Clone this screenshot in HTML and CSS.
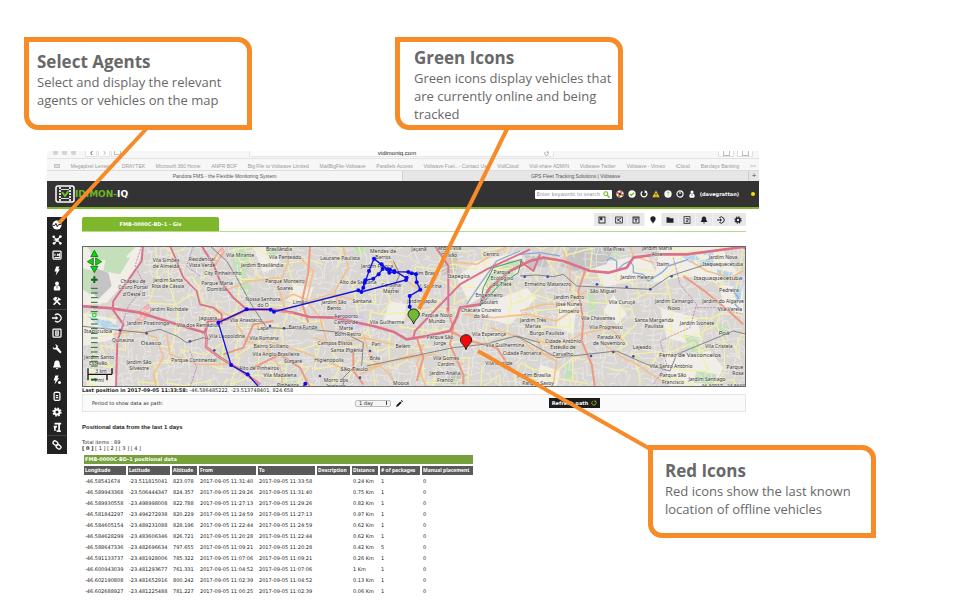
FILE: index.html
```html
<!DOCTYPE html>
<html lang="en">
<head>
<meta charset="utf-8">
<title>Vidimon-IQ vehicle map guide</title>
<link rel="stylesheet" href="styles.css">
</head>
<body>
<svg class="defs" aria-hidden="true">
  <symbol id="i-pulse" viewBox="0 0 12 12"><circle cx="6" cy="6" r="5.500" fill="currentColor"/><path d="M1 6.500h2.500l1.200-2.500 1.600 4 1.400-2.500H11" fill="none" stroke="#222" stroke-width="1.200"/></symbol>
  <symbol id="i-net" viewBox="0 0 12 12"><path d="M1.500 2l9 8M10.500 1.500l-8 9M2 6l4 0 4-4" stroke="currentColor" stroke-width="1.300" fill="none"/><circle cx="2" cy="2" r="1.500" fill="currentColor"/><circle cx="10" cy="2" r="1.700" fill="currentColor"/><circle cx="6" cy="6" r="2" fill="currentColor"/><circle cx="2.500" cy="10" r="1.600" fill="currentColor"/><circle cx="10" cy="10" r="1.600" fill="currentColor"/></symbol>
  <symbol id="i-chart" viewBox="0 0 12 12"><rect x="1.200" y="1.200" width="9.600" height="9.600" rx="1" fill="none" stroke="currentColor" stroke-width="1.500"/><path d="M3 9h6.500M3.500 7V4.500M6 7l1-2 2 2V4" fill="none" stroke="currentColor" stroke-width="1.300"/></symbol>
  <symbol id="i-bolt" viewBox="0 0 12 12"><path d="M5 .5h4L7.500 4H9.500L4.500 11.500 5.500 6.500H3z" fill="currentColor"/></symbol>
  <symbol id="i-user" viewBox="0 0 12 12"><circle cx="6" cy="3" r="2.300" fill="currentColor"/><path d="M6 5c5 0 4.500 6.500 2.500 6.500h-5C1.500 11.500 1 5 6 5z" fill="currentColor"/><path d="M6 6v3" stroke="#222" stroke-width=".8"/></symbol>
  <symbol id="i-tools" viewBox="0 0 12 12"><path d="M2 10.500L9 3M3.500 4L10 10.500" stroke="currentColor" stroke-width="2"/><path d="M1 3.500L4 1l3 1-3.500 4zM8 1l.5 2 2.500.5-1.500 2L7 4.500z" fill="currentColor"/></symbol>
  <symbol id="i-exit" viewBox="0 0 12 12"><path d="M3.500 2.300A4.600 4.600 0 1 1 3.500 9.700" fill="none" stroke="currentColor" stroke-width="1.500"/><path d="M0 5.200h4.500V3.500L7.500 6l-3 2.500V6.800H0z" fill="currentColor"/></symbol>
  <symbol id="i-box" viewBox="0 0 12 12"><rect x="1.200" y="1.200" width="9.600" height="9.600" rx="1" fill="none" stroke="currentColor" stroke-width="1.500"/><path d="M4.500 3.500h3v5h-3zM4 6h3" fill="none" stroke="currentColor" stroke-width="1.300"/></symbol>
  <symbol id="i-wrench" viewBox="0 0 12 12"><path d="M1 3.500L3 5l2-1V2L3.500.7C6 .3 7.500 2 7 4l4.500 5.500-1.500 2L5 6.500C2.500 7.200.7 6 1 3.500z" fill="currentColor"/></symbol>
  <symbol id="i-bell" viewBox="0 0 12 12"><path d="M6 .7c3 0 3.200 2.300 3.400 5L11 9H1l1.600-3.300C2.800 3 3 .7 6 .7zM4.500 9.700h3L6 11.500z" fill="currentColor"/></symbol>
  <symbol id="i-event" viewBox="0 0 12 12"><path d="M4 .5h4L6.500 4H8.500L3 11.500 4.200 6.500H2z" fill="currentColor"/><circle cx="9" cy="9" r="1.800" fill="currentColor"/></symbol>
  <symbol id="i-clip" viewBox="0 0 12 12"><rect x="2.500" y="1.500" width="7" height="9.700" rx="1.500" fill="none" stroke="currentColor" stroke-width="1.500"/><path d="M4 1.500h4M4.500 5.500h3M4.500 8h3" stroke="currentColor" stroke-width="1.500"/></symbol>
  <symbol id="i-gear" viewBox="0 0 12 12"><circle cx="6" cy="6" r="3" fill="none" stroke="currentColor" stroke-width="2.400"/><circle cx="6" cy="6" r="4.700" fill="none" stroke="currentColor" stroke-width="1.700" stroke-dasharray="2 1.690"/></symbol>
  <symbol id="i-type" viewBox="0 0 12 12"><path d="M3 2h8M8.500 2v9.500M5.500 11h5M2 5.500h4M3.500 5.500v5" stroke="currentColor" stroke-width="2" fill="none"/></symbol>
  <symbol id="i-link" viewBox="0 0 12 12"><g fill="none" stroke="currentColor" stroke-width="1.600"><rect x="1" y="1.500" width="6" height="4.400" rx="2.200" transform="rotate(35 4 4)"/><rect x="5" y="6" width="6" height="4.400" rx="2.200" transform="rotate(35 8 8)"/></g></symbol>
  <symbol id="i-book" viewBox="0 0 12 12"><rect x="1.500" y="1.500" width="9" height="9" fill="none" stroke="currentColor" stroke-width="1.400"/><path d="M3 2h3.500v5L5 5.700 3.500 7z" fill="currentColor"/></symbol>
  <symbol id="i-share" viewBox="0 0 12 12"><rect x="1" y="1.500" width="10" height="9" fill="none" stroke="currentColor" stroke-width="1.200"/><path d="M9 3.500L3.500 6 9 8.500M3 3.500l2 2" fill="none" stroke="currentColor" stroke-width="1.200"/></symbol>
  <symbol id="i-form" viewBox="0 0 12 12"><rect x="1.500" y="1.500" width="9" height="9" fill="none" stroke="currentColor" stroke-width="1.300"/><path d="M2 3h8M4 5.500h4M6 5.500V9" stroke="currentColor" stroke-width="1.400"/></symbol>
  <symbol id="i-pin" viewBox="0 0 12 12"><path d="M6 11.500C5.500 9 2 7.500 2 4.500a4 4 0 0 1 8 0C10 7.500 6.500 9 6 11.500z" fill="currentColor"/></symbol>
  <symbol id="i-folder" viewBox="0 0 12 12"><path d="M.8 2h4l1 1.500h5.400V10H.8z" fill="currentColor"/></symbol>
  <symbol id="i-report" viewBox="0 0 12 12"><rect x="1.500" y="1" width="9" height="10" fill="none" stroke="currentColor" stroke-width="1.200"/><path d="M4 4h4v1.500L5 7v1.500h3" fill="none" stroke="currentColor" stroke-width="1.300"/></symbol>
  <symbol id="i-help" viewBox="0 0 12 12"><circle cx="6" cy="6" r="5.500" fill="#fff"/><path d="M4.500 4.500c0-2 3.200-1.800 3 0C7.400 5.500 6 5.500 6 7M6 8v1.300" fill="none" stroke="#76b82a" stroke-width="1.300"/></symbol>
  <symbol id="i-ok" viewBox="0 0 12 12"><circle cx="6" cy="6" r="5.500" fill="#fff"/><path d="M3 6l2.200 2L9 4" fill="none" stroke="#76b82a" stroke-width="2"/></symbol>
  <symbol id="i-buoy" viewBox="0 0 12 12"><circle cx="6" cy="6" r="3.900" fill="none" stroke="#fff" stroke-width="3"/><circle cx="6" cy="6" r="3.900" fill="none" stroke="#e0522b" stroke-width="3" stroke-dasharray="3.060 3.060"/></symbol>
  <symbol id="i-reload" viewBox="0 0 12 12"><path d="M3.500 2.200A4.400 4.400 0 1 0 8.500 2.200" fill="none" stroke="currentColor" stroke-width="1.900"/><path d="M7 0v5l4-2.500z" fill="currentColor"/></symbol>
  <symbol id="i-warn" viewBox="0 0 12 12"><path d="M6 .8L11.500 11H.5z" fill="#f6c423"/><path d="M6 4.500v3.300M6 8.800V10" stroke="#222" stroke-width="1.300"/></symbol>
  <symbol id="i-power" viewBox="0 0 12 12"><circle cx="6" cy="6" r="4.600" fill="none" stroke="#fff" stroke-width="1.700"/><path d="M6 2.500V6" stroke="#fff" stroke-width="1.600"/></symbol>
</svg>

<main class="stage">
  <div class="browser">
    <div class="chrome">
      <div class="chrome-bar">
        <span class="lights"><i></i><i></i><i></i></span>
        <span class="navs"><b class="nav"><svg viewBox="0 0 6 6"><path d="M4 0L2 2.500 4 5" fill="none" stroke="#444"/></svg></b><b class="nav"><svg viewBox="0 0 6 6"><path d="M2 0l2 2.500L2 5" fill="none" stroke="#aaa"/></svg></b><b class="nav tabs-icon"></b></span>
        <span class="address">vidimoniq.com<svg class="reload"><use href="#i-reload"/></svg></span>
        <span class="chrome-tools"><b></b><b></b></span>
      </div>
      <nav class="bookmarks">
        <i class="grid-mark"></i>
        <a href="#">Megapixel Lenses</a><a href="#">DRAYTEK</a><a href="#">Microsoft 360 Home</a><a href="#">ANPR BOF</a><a href="#">Big File to Vidiwave Limited</a><a href="#">MailBigFile-Vidiwave</a><a href="#">Parallels Access</a><a href="#">Vidiwave Fuel...- Contact Us</a><a href="#">VidiCloud</a><a href="#">Vidi-share ADMIN</a><a href="#">Vidiwave Twitter</a><a href="#">Vidiwave - Vimeo</a><a href="#">iCloud</a><a href="#">Barclays Banking</a>
        <span class="more">&gt;&gt;</span>
      </nav>
      <div class="tabs"><span class="tab on">Pandora FMS - the Flexible Monitoring System</span><span class="tab">GPS Fleet Tracking Solutions | Vidiwave</span><span class="plus">+</span></div>
    </div>

    <header class="app-head">
      <svg class="logo" viewBox="0 0 20 18"><rect x="1" y="1" width="18" height="16" rx="2" fill="#333" stroke="#fff" stroke-width="1.500"/><path d="M5 2v14M15 2v14" stroke="#ddd" stroke-width="2" stroke-dasharray="2 1"/><path d="M6 4.500h8M6 13.500h8" stroke="#ddd"/><path d="M7 7l3 4 3.500-5" fill="none" stroke="#76c82a" stroke-width="1.800"/></svg>
      <span class="brand">IDIMON-<em>IQ</em></span>
      <div class="head-tools">
        <div class="search"><input type="text" aria-label="Search" placeholder="Enter keywords to search"><svg viewBox="0 0 10 10"><circle cx="4" cy="4" r="2.800" fill="none" stroke="#76b82a" stroke-width="1.500"/><path d="M6 6l3.500 3.500" stroke="#76b82a" stroke-width="2"/></svg></div>
        <svg class="hi"><use href="#i-buoy"/></svg><svg class="hi"><use href="#i-ok"/></svg><svg class="hi"><use href="#i-reload"/></svg><svg class="hi"><use href="#i-warn"/></svg><svg class="hi"><use href="#i-help"/></svg><svg class="hi"><use href="#i-power"/></svg><svg class="hi"><use href="#i-user"/></svg>
        <span class="who">(davegrattan)</span><i class="dot"></i>
      </div>
    </header>

    <div class="app">
      <nav class="side" aria-label="Main menu">
        <div class="side-group"><svg><use href="#i-pulse"/></svg><svg><use href="#i-net"/></svg><svg><use href="#i-chart"/></svg><svg><use href="#i-bolt"/></svg><svg><use href="#i-user"/></svg><svg><use href="#i-tools"/></svg></div>
        <div class="side-group tall"><svg><use href="#i-exit"/></svg><svg><use href="#i-box"/></svg><svg><use href="#i-wrench"/></svg><svg><use href="#i-bell"/></svg><svg><use href="#i-event"/></svg><svg><use href="#i-clip"/></svg><svg><use href="#i-gear"/></svg><svg><use href="#i-type"/></svg></div>
        <div class="side-group last-group"><svg><use href="#i-link"/></svg></div>
      </nav>

      <section class="content">
        <div class="agent-head">
          <h1 class="agent-tab">FMB-0000C-BD-1 - Gis</h1>
          <div class="agent-tools"><span><svg><use href="#i-book"/></svg></span><span><svg><use href="#i-share"/></svg></span><span><svg><use href="#i-form"/></svg></span><span class="on"><svg><use href="#i-pin"/></svg></span><span><svg><use href="#i-folder"/></svg></span><span><svg><use href="#i-report"/></svg></span><span><svg><use href="#i-bell"/></svg></span><span><svg><use href="#i-exit"/></svg></span><span><svg><use href="#i-gear"/></svg></span></div>
        </div>

        <svg class="map" viewBox="82 245 664 141" role="img" aria-label="Map of vehicle positions">
          <rect x="82" y="245" width="664" height="141" fill="#d9d6d3"/>
          <g transform="translate(80 240) scale(.333333)" stroke-linejoin="round" fill="none">
            <g fill="#f1eee8">
              <path d="M0 15h190l-20 70-90 100-80 10zM10 215l100 20-10 60-90 20zM20 380l90 20v40H20zM520 20l70-5 10 60-50 20zM640 130l60 10-20 60-60-20zM1130 110l60-50 140-30-10 60-90 60-60 40zM1190 200l150-60 30 30-80 80-90-20zM1540 70l160-30 30 60-160 40zM1740 20l180-5 60 90-70 20-90-20-100 20zM1740 200l110 30 20 90-110-30zM1600 160l40 60-30 30-40-40zM1440 180l50 10-10 90-50-20zM1750 350l140-20 40 50-30 60h-130zM1380 370l60 20-10 50h-60zM930 180l50 10-10 60-60-10zM1920 130l70 10v80l-60-10z"/>
            </g>
            <g fill="#c3e0bb">
              <path d="M20 15h150l-30 30-20 50-30-40-40 5zM0 80l40 10 20 60-30 10-30-20zM455 25l40-10 20 40-20 50 20 40-20 20-30-60zM560 15l40 0-10 30-30-5zM80 40l70 10-30 50-50-10zM400 330l50 0 0 40-40-10zM1220 110l60-50 45-5-30 60-80 60zM1590 20l30 20-20 20zM1810 280l50 10 10 60-40-20zM1900 240l50 20-20 30zM820 15l40 5-10 20-30-5zM1460 370l20 0-10 60-15-20zM1520 150l20 0 10 60-20 10zM600 420l50 0 0 20-50 0zM1850 390l60 10-10 30-60-5z"/>
            </g>
            <g fill="#c5c4c5"><path d="M45 80l40 15 10 40-40 40-25-30zM1080 20l50 0 5 70-50 15zM1330 40l60 5 20 30-60 10zM1470 20l130 0-20 50-80 25-60-20zM1110 390l50 10-10 30-50 0z"/></g>
            <path d="M395 60l30-40 10 10-30 45zM165 240l40-30 5 10-35 30zM175 215l30-25 6 8-30 25z" fill="#f3b7b2" stroke="#ea8d88" stroke-width="2"/>
            <path d="M770 215l80 0 0 50-80 10z" fill="#d9c9e3"/>
            <g fill="#b5d6ea"><path d="M20 225l70 15 30 20-50 5zM1800 40l40-5 20 20-30 10zM1850 60l50-10 0 20-40 5zM1870 30l30 0 0 12-30 0zM1910 85l50 10-20 25-25-10zM1960 130l25 10-5 50-20-30zM1970 90l20 15-5 20-15-15z"/></g>
            <g id="minor" stroke="#f2f0ee" stroke-width="2"></g>
            <g id="streets" stroke="#f3efa6" stroke-width="4"></g>
            <path d="M1160 190l40-60 50-70 70-30M1320 40l60-5 60 10M1580 60l10-10 20 10 0 30 20-20 20-10 10 15 0 20 30 5 15 20 40-25 20-20 60-20M1960 150l15 20-10 20 20 20" stroke="#8fa9d8" stroke-width="4"/>
            <g stroke="#f4c08e" stroke-width="5">
              <path d="M100 280l70-10 60 20 20 60-30 50 10 40M260 280l10 60 80 30 90 0M400 200l60 30 40 70 60 20 40 60 10 60M600 180l40-20 50 20 60-20 70 15M620 15l5 50-30 70 20 70M700 290l60 20 90-20 90 20M660 50l40 40-20 90 40 50 20 70M850 280l20 70 60 50 20 40M790 20l15 60-40 70 10 50M560 300l100 30 150 60 60-10 130-40M930 60l50 60 60 40M1100 60l90 10 100-60M1150 220l90 10 100-10 90 20 60-40M1380 300l60 20 60-40 90-20 40 40M1370 290l20 50 40 20-10 70M1320 210l70-20 70 0 60-40M1450 30l20 60 0 60M1030 310l-20 60 30 70M1570 310l60 40 40 20 90 60M1830 60l50 30 70 20 40-20M1650 15l10 30 60 20M840 400l90-40 130-20 90 30M1230 260l90 30 40 40 80 20M430 150l80-30 90-10"/>
            </g>
            <g stroke="#ee9a80" stroke-width="6">
              <path d="M1515 90l-20 60 15 90-5 60 30 70 10 70M1810 105l70 50 60 50 50 45M690 15l-5 80-20 90 20 60M1100 200l20 60-10 50 40 90 0 30M1010 290l20 60-20 70M520 380l80-40 60 40 30 60M430 340l60-20 30-70 60-10M820 330l0 60 30 40M1110 270l60 30 80 20 40 60"/>
            </g>
            <g stroke="#dc7289" stroke-width="8">
              <path d="M0 195l95 7 85 13 110 35 85 25 5 15-2 28 42 32 50 30 70 50"/>
              <path d="M190 0l-5 60-35 50-50 70-2 25 32 45-18 50-4 140" stroke-width="6"/>
              <path d="M270 15l20 45 20 50 40 40 10 40 40 10 25 20 0 30" stroke-width="5"/>
              <path d="M375 275l10-35 55-5 60-30 70 0 70 10 50 13 70 2 120 25 60 17 40 23 60-10 70-15 20-40 10-30 60-10 30-50 60-50 60-30 40-10 60 10 80 30 55 5 55-15 20-30 70-10 90 0 170-22 40 22 25 50-25 70 35 60 0 60-35 60-15 100"/>
              <path d="M365 15l35 55 20 50 40 50 40 35M1000 290l5-20 135-140 80-45 130-60M1065 15l20 30 20 30 0 135M1320 60l40 30 20-50" stroke-width="6"/>
            </g>
            <path d="M375 275l5 15-2 28 42 32 50 30 70 50M500 207l70 0 70 10" stroke="#f0a0ae" stroke-width="3"/>
            <g stroke="#858588" stroke-width="3">
              <path d="M0 255l120 13 70 7 50-10 50 20 30 20 50-15 20 5M390 15l50 45 30 50 50 90 40 60 130 5 100 10 60 30-5 70M860 375l260-55 90-10 100-25 70 20M1320 105l50-3 50 5 30-7 40 35 220 10 60-40 110-35 40 0M1300 285l20 5 110 60 180-20 90 40 70 20 20-50 170-70 40 10M820 380l-30 30 0 30M940 60l20 40-30 60"/>
            </g>
            <path d="M185 15l-20 60 30 60-50 60-20 60M340 15l-20 60 40 30M1780 50l20 80 50 60-20 70-90 40 20 70-40 60M1850 200l60 0 80 20M330 440l20-60-20-50" stroke="#c490c8" stroke-width="3" stroke-dasharray="7 3"/>
            <path d="M1210 140l30-60 85-25-10 40-60 40-55 60z" stroke="#4c8f63" stroke-width="3"/>
            <g id="stations" fill="#3f4fa5"></g>
          </g>
          <g id="labels" class="labels"></g>
          <g transform="translate(80 240) scale(.333333)" fill="none">
            <path d="M538 440L503 400 453 372 415 245 500 205 572 206 582 212 835 148 844 153 978 117 978 110 943 90 922 85 882 53 867 90 850 140 856 118 880 113 896 100 908 84 905 70 882 53M835 148l9 5 12-35M905 70l23 25 15-3 42 1 23 7 2 24 11 22-32 19 0 32 12 28M676 428l-15 20" stroke="#1414d8" stroke-width="4"/>
            <g id="track" fill="#0a0af0"></g>
            <g stroke="#124d12" stroke-width="2" fill="#08d908"><path d="M43 28l11 19H32zM43 95l11-19H32zM22 62l18-11v22zM65 62L47 51v22z"/></g>
            <path d="M33 116h20M43 106v20" stroke="#0b6b12" stroke-width="6"/>
            <path d="M33 142h20M33 156h20M33 170h20M33 184h20M33 198h20M33 212h20M33 235h20M33 249h20M33 263h20M33 277h20M33 291h20M33 305h20M33 319h20M33 333h20M33 347h20M33 361h20M33 375h20" stroke="#1c6b2c" stroke-width="3"/>
            <path d="M38 217h10v10H38z" stroke="#0ae00a" stroke-width="3"/>
            <path d="M33 416h20" stroke="#0b6b12" stroke-width="6"/>
            <path d="M24 382v36M24 400h72M96 382v18M81 400v18" stroke="#111" stroke-width="4"/>
            <path d="M1001 249c-5-16-17-19-17-29a17 16 0 0 1 34 0c0 10-12 13-17 29z" fill="#72b832" stroke="#222" stroke-width="3"/>
            <path d="M1158 326c-5-16-17-19-17-29a17 16 0 0 1 34 0c0 10-12 13-17 29z" fill="#f70808" stroke="#222" stroke-width="3"/>
          </g>
        </svg>

        <p class="last"><strong>Last position in 2017-09-05 11:33:58:</strong> -46.586485222, -23.513748401, 824.658</p>

        <form class="filter">
          <label for="period">Period to show data as path:</label>
          <span class="period"><select id="period"><option>1 day</option></select><svg viewBox="0 0 10 10"><path d="M0 10l1-3 5-5 2 2-5 5zM7 1l1-1 2 2-1 1z" fill="#111"/></svg></span>
          <button type="button">Refresh path <svg><use href="#i-reload"/></svg></button>
        </form>

        <h2>Positional data from the last 1 days</h2>
        <p class="total">Total items : 89</p>
        <p class="pages"><strong>[ 0 ]</strong> [ 1 ] [ 2 ] [ 3 ] [ 4 ]</p>

        <table>
          <colgroup><col class="c1"><col class="c1"><col class="c3"><col class="c4"><col class="c4"><col class="c6"><col class="c7"><col class="c8"><col class="c9"></colgroup>
          <thead>
            <tr class="title"><th colspan="9">FMB-0000C-BD-1 positional data</th></tr>
            <tr class="heads"><th>Longitude</th><th>Latitude</th><th>Altitude</th><th>From</th><th>To</th><th>Description</th><th>Distance</th><th># of packages</th><th>Manual placement</th></tr>
          </thead>
          <tbody>
            <tr><td>-46.58541674</td><td>-23.511815041</td><td>823.078</td><td>2017-09-05 11:31:40</td><td>2017-09-05 11:33:58</td><td></td><td>0.24 Km</td><td>1</td><td>0</td></tr>
            <tr><td>-46.589943368</td><td>-23.506444347</td><td>824.357</td><td>2017-09-05 11:29:26</td><td>2017-09-05 11:31:40</td><td></td><td>0.75 Km</td><td>1</td><td>0</td></tr>
            <tr><td>-46.589930558</td><td>-23.498998008</td><td>822.788</td><td>2017-09-05 11:27:13</td><td>2017-09-05 11:29:26</td><td></td><td>0.82 Km</td><td>1</td><td>0</td></tr>
            <tr><td>-46.581842297</td><td>-23.494272938</td><td>820.229</td><td>2017-09-05 11:24:59</td><td>2017-09-05 11:27:13</td><td></td><td>0.97 Km</td><td>1</td><td>0</td></tr>
            <tr><td>-46.584605154</td><td>-23.489231088</td><td>828.196</td><td>2017-09-05 11:22:44</td><td>2017-09-05 11:24:59</td><td></td><td>0.62 Km</td><td>1</td><td>0</td></tr>
            <tr><td>-46.584628299</td><td>-23.483606346</td><td>826.721</td><td>2017-09-05 11:20:28</td><td>2017-09-05 11:22:44</td><td></td><td>0.62 Km</td><td>1</td><td>0</td></tr>
            <tr><td>-46.588647336</td><td>-23.482696634</td><td>797.655</td><td>2017-09-05 11:09:21</td><td>2017-09-05 11:20:28</td><td></td><td>0.42 Km</td><td>5</td><td>0</td></tr>
            <tr><td>-46.591133737</td><td>-23.481928006</td><td>785.322</td><td>2017-09-05 11:07:06</td><td>2017-09-05 11:09:21</td><td></td><td>0.26 Km</td><td>1</td><td>0</td></tr>
            <tr><td>-46.600943039</td><td>-23.481293677</td><td>761.331</td><td>2017-09-05 11:04:52</td><td>2017-09-05 11:07:06</td><td></td><td>1 Km</td><td>1</td><td>0</td></tr>
            <tr><td>-46.602190808</td><td>-23.481652916</td><td>800.242</td><td>2017-09-05 11:02:39</td><td>2017-09-05 11:04:52</td><td></td><td>0.13 Km</td><td>1</td><td>0</td></tr>
            <tr><td>-46.602688927</td><td>-23.481225488</td><td>781.227</td><td>2017-09-05 11:00:25</td><td>2017-09-05 11:02:39</td><td></td><td>0.06 Km</td><td>1</td><td>0</td></tr>
            <tr><td>-46.603688363</td><td>-23.480884403</td><td>779.314</td><td>2017-09-05 10:58:10</td><td>2017-09-05 11:00:25</td><td></td><td>0.22 Km</td><td>1</td><td>0</td></tr>
          </tbody>
        </table>
      </section>
    </div>
  </div>

  <svg class="leaders" viewBox="0 0 960 600" aria-hidden="true"><path d="M148 127L59 223M508 127L419 309M652 450L478 351" stroke="#f68b28" stroke-width="4" fill="none"/></svg>
  <aside class="callout agents"><h3>Select Agents</h3><p>Select and display the relevant<br>agents or vehicles on the map</p></aside>
  <aside class="callout green"><h3>Green Icons</h3><p>Green icons display vehicles that<br>are currently online and being<br>tracked</p></aside>
  <aside class="callout red"><h3>Red Icons</h3><p>Red icons show the last known<br>location of offline vehicles</p></aside>
</main>
<script src="map.js"></script>
</body>
</html>
```

FILE: styles.css
```css
* { box-sizing: border-box; }
body { margin: 0; background: #fff; font-family: "DejaVu Sans", Verdana, sans-serif; font-size: 5px; line-height: 6px; color: #222; }
h1, h2, h3, p { margin: 0; }
a { color: inherit; text-decoration: none; }
.defs { position: absolute; width: 0; height: 0; }
.stage { position: relative; height: 100vh; overflow: hidden; padding: 151px 201px 0 47px; }

.chrome { font-family: "Liberation Sans", Arial, sans-serif; background: #f7f7f7; color: #999; }
.chrome-bar { display: flex; align-items: flex-start; height: 8px; border-bottom: 1px solid #e2e2e2; padding: 0 6px; }
.lights { display: flex; gap: 4px; width: 32px; }
.lights i { width: 5px; height: 4px; border-radius: 0 0 3px 3px; background: #d3d3d3; }
.navs { display: flex; gap: 1px; }
.nav { width: 12px; height: 6px; border: 1px solid #e3e3e3; border-top: 0; background: #fff; }
.nav svg { display: block; width: 5px; height: 5px; margin: 0 auto; }
.tabs-icon::before { content: ""; display: block; width: 5px; height: 3px; margin: 0 auto; border: 1px solid #bbb; border-top: 0; }
.address { flex: 1; margin: 0 164px 0 126px; height: 6px; padding-right: 4px; border: 1px solid #e6e6e6; border-top: 0; background: #fcfcfc; text-align: center; font-size: 6px; line-height: 5px; color: #222; }
.reload { float: right; width: 5px; height: 5px; color: #999; }
.chrome-tools { display: flex; gap: 3px; }
.chrome-tools b { width: 16px; height: 6px; border: 1px solid #e0e0e0; border-top: 0; background: #fff; }
.chrome-tools b::before { content: ""; display: block; width: 5px; height: 4px; margin: 0 auto; border: 1px solid #bbb; border-top: 0; }
.bookmarks { display: flex; justify-content: space-between; align-items: center; height: 12px; padding: 2px 3px 0 7px; border-bottom: 1px solid #dcdcdc; white-space: nowrap; }
.grid-mark { width: 6px; height: 4px; border: 1px solid #c4c4c4; background: #ddd; }
.tabs { display: flex; height: 10px; line-height: 10px; text-align: center; color: #555; background: #e6e6e6; }
.tab { flex: 34; }
.tab.on { flex: 35; background: #f5f5f5; border-right: 1px solid #d0d0d0; }
.plus { width: 11px; border-left: 1px solid #ccc; font-size: 8px; }

.app-head { display: flex; align-items: center; height: 28px; padding: 0 4px 0 8px; background: #333; border-bottom: 2px solid #7eb72b; }
.logo { width: 20px; height: 18px; }
.brand { font-size: 9px; line-height: 10px; font-weight: bold; color: #6fb52a; }
.brand em { font-style: normal; color: #fff; }
.head-tools { display: flex; align-items: center; gap: 4px; margin-left: auto; }
.search { display: flex; align-items: center; width: 77px; height: 9px; padding: 0 2px; background: #fff; border-radius: 1px; }
.search input { flex: 1; min-width: 0; height: 7px; padding: 0; border: 0; background: none; font: 5px/7px "DejaVu Sans", sans-serif; }
.search input::placeholder { color: #888; }
.search svg { width: 7px; height: 7px; }
.hi { width: 8px; height: 8px; color: #fff; }
.who { color: #fff; font-weight: bold; }
.dot { width: 4px; height: 4px; margin-left: 8px; border-radius: 2px; background: #fd0; }

.app { display: flex; align-items: flex-start; }
.side { width: 20px; margin-top: 8px; background: #222; color: #fff; }
.side-group { display: flex; flex-direction: column; align-items: center; justify-content: space-around; height: 93px; border-bottom: 1px solid #444; }
.side-group.tall { height: 126px; }
.side-group.last-group { height: 18px; border: 0; }
.side svg { width: 10px; height: 10px; }

.content { flex: 1; min-width: 0; padding: 4px 13px 0 15px; }
.agent-head { display: flex; justify-content: space-between; align-items: flex-end; height: 19px; border-bottom: 1px solid #b9d98b; }
.agent-tab { width: 137px; height: 14px; border-radius: 2px 2px 0 0; background: #7eb72b; color: #fff; text-align: center; font-size: 5px; line-height: 14px; }
.agent-tools { display: flex; align-self: flex-start; gap: 1px; background: #f2f2f2; }
.agent-tools span { display: grid; place-items: center; width: 16px; height: 13px; background: #e8e8e8; }
.agent-tools .on { background: #fff; }
.agent-tools svg { width: 8px; height: 8px; color: #222; }
.map { display: block; width: 100%; margin-top: 14px; outline: 1px solid #666; outline-offset: -1px; }
.labels { font-family: "Noto Sans", sans-serif; font-size: 5px; fill: #333; text-anchor: middle; paint-order: stroke; stroke: #f4f2ee; stroke-width: 1px; stroke-opacity: .7; }
.labels .city { font-size: 6px; }
.last { line-height: 7px; white-space: nowrap; }

.filter { display: flex; align-items: center; height: 18px; padding: 0 145px 0 9px; background: #fafafa; border: 1px solid #e6e6e6; }
.filter label { flex: 263; }
.period { display: flex; align-items: center; gap: 5px; flex: 194; }
.period select { width: 36px; height: 7px; padding: 0 3px; border: 1px solid #bbb; border-radius: 2px; background: linear-gradient(#444, #444) right 3px center / 1px 4px no-repeat #f4f4f4; color: #222; font: 5px/5px "DejaVu Sans", sans-serif; appearance: none; }
.period svg { width: 7px; height: 7px; }
.filter button { display: flex; align-items: center; justify-content: center; gap: 3px; width: 51px; height: 10px; padding: 0; border: 0; background: #1c1c1c; color: #fff; font: bold 5px/6px "DejaVu Sans", sans-serif; }
.filter button svg { width: 6px; height: 6px; color: #7eb72b; }

h2 { margin-top: 11px; font: bold 6px/8px "Liberation Sans", Arial, sans-serif; }
.total { margin-top: 8px; }
table { table-layout: fixed; width: 393px; margin-top: 2px; border-collapse: separate; border-spacing: 2px; white-space: nowrap; }
.c1 { width: 42px; } .c3 { width: 25px; } .c4 { width: 57px; } .c6 { width: 33px; } .c7 { width: 26px; } .c8 { width: 40px; } .c9 { width: 51px; }
th, td { height: 9px; padding: 0 1px; font-size: 5px; line-height: 7px; text-align: left; }
th { background: #5a5a5a; color: #fff; }
.heads th { font-family: "Noto Sans", sans-serif; }
.title th { background: #76a03c; }

.leaders { position: absolute; left: 0; top: 0; width: 960px; height: 600px; }
.callout { position: absolute; width: 228px; height: 93px; border: 5px solid #f68b28; border-radius: 0 14px 0 14px; background: #fff; color: #686868; font-family: "Open Sans", sans-serif; white-space: nowrap; }
.callout h3 { font-size: 17px; line-height: 23px; }
.callout p { font-size: 13px; line-height: 18px; }
.agents { left: 24px; top: 37px; padding: 8px; }
.green { left: 395px; top: 37px; padding: 4px 14px; }
.red { left: 648px; top: 445px; padding: 9px 12px; }
```

FILE: map.js
```js
const NS = "http://www.w3.org/2000/svg";
const el = (parent, tag, attrs, text) => {
  const node = document.createElementNS(NS, tag);
  for (const k in attrs) node.setAttribute(k, attrs[k]);
  if (text) node.textContent = text;
  document.getElementById(parent).appendChild(node);
};

// Street mesh: a jittered grid with a fixed seed, so every load draws the same map.
let seed = 11;
const rnd = () => (seed = (seed * 16807) % 2147483647) / 2147483647;
function mesh(id, step, keep) {
  const cols = Math.ceil(2000 / step) + 1, rows = Math.ceil(440 / step) + 1, pts = [];
  for (let r = 0; r < rows; r++) {
    pts.push([]);
    for (let c = 0; c < cols; c++) pts[r].push([Math.round((c + rnd() * .9) * step), Math.round((r + rnd() * .9) * step)]);
  }
  let d = "";
  for (let r = 0; r < rows; r++) for (let c = 0; c < cols; c++) {
    const p = pts[r][c];
    if (p[0] < 190 && p[1] < 180) continue;
    if (c + 1 < cols && rnd() < keep) d += `M${p}L${pts[r][c + 1]}`;
    if (r + 1 < rows && rnd() < keep) d += `M${p}L${pts[r + 1][c]}`;
  }
  el(id, "path", { d });
}
mesh("minor", 17, .5);
mesh("streets", 50, .55);

// Place names: x, y of the text centre, in thirds of a pixel from (80, 240).
const names = [
  [257,56,"Vila Simões"],[257,76,"de Almeida"],[365,53,"Residencial"],[365,72,"Vista Verde"],[480,42,"Vila Mirante"],[598,24,"Brasilândia"],[615,47,"Vila Penteado"],[545,72,"Jardim Brasilândia"],[430,97,"City Pinheirinho"],[160,120,"Chapéu de"],[160,139,"Couro Portal"],[162,158,"d'Oeste II"],[265,117,"Jardim Santa"],[265,136,"Rita de Cássia"],[412,125,"Parque Maria"],[412,144,"Domitila"],[614,121,"Parque Monteiro"],[614,140,"Soares"],[550,174,"Nossa Senhora"],[550,193,"do Ó"],[268,203,"Jardim Rochdale"],[385,230,"Jaguara"],[203,247,"Jardim Piratininga"],[353,253,"Vila dos Remédios"],[497,236,"Vila Anastácio"],[550,262,"Lapa"],[660,184,"Limão"],[668,259,"Barra Funda"],[130,298,"Quitaúna"],[213,307,"Osasco",1],[53,270,"Itapicuíba",1],[440,286,"Vila Leopoldina"],[552,292,"Vila Romana"],[572,315,"Bairro Siciliano"],[587,338,"Vila Anglo-Brasileira"],[640,361,"Sumaré"],[342,357,"Parque Continental"],[178,363,"Jardim São"],[178,382,"Silvestre"],[537,380,"Alto de Pinheiros"],[600,403,"Vila Madalena"],[57,348,"Jardim Santo"],[55,367,"Estêvão"],[625,432,"Pinheiros"],[62,391,"3 km"],[58,416,"1 mi"],
  [779,50,"Lauzane Paulista"],[909,30,"Mendes de"],[909,48,"Barros"],[1018,24,"Jaçanã"],[1106,22,"Jardim Vila"],[1106,41,"Galvão"],[1233,38,"Centro"],[890,75,"Jardim França"],[1030,97,"Jardim Brasil"],[835,124,"Alto de Santana"],[1138,106,"Itapegica"],[932,132,"Carolina"],[932,151,"Mazzei"],[1050,134,"V. Sabrina"],[847,180,"Santana"],[763,184,"Jardim São"],[763,202,"Bento"],[1025,181,"Jardim Japão"],[920,242,"Vila Guilherme"],[1072,222,"Parque Novo"],[1072,241,"Mundo"],[797,224,"Aeroporto"],[797,242,"Campo de"],[797,260,"Marte"],[805,279,"Bom Retiro"],[765,305,"Campos Elísios"],[800,328,"Santa Ifigênia"],[747,356,"Higienópolis"],[889,308,"Pari"],[968,316,"Belém"],[884,351,"Brás"],[822,383,"São Paulo",1],[768,416,"Morro dos"],[768,434,"Ingleses"],[962,425,"Mooca"],[1080,287,"Parque São"],[1080,306,"Jorge"],[1097,351,"Vila Gomes"],[1097,370,"Cardim"],[1095,397,"Jardim Anália"],[1095,416,"Franco"],[1265,92,"Parque"],[1265,110,"Ecológico"],[1265,128,"do Tietê"],[1228,163,"Engenheiro"],[1228,182,"Goulart"],[1203,206,"Chácara Cruzeiro"],[1203,225,"do Sul"],[1228,279,"Vila Esperança"],[1275,311,"Vila Guilhermina"],[1325,336,"Cidade Patriarca"],[1256,365,"Vila Matilde"],
  [1603,24,"Vila Pires"],[1730,22,"Jardim Maria"],[1730,40,"Alice"],[1750,70,"Itaim"],[1928,48,"Jardim Nova"],[1928,68,"Itaquaquecetuba"],[1914,111,"Itaquaquecetuba",1],[1670,107,"Jardim Helena"],[1403,130,"Ermelino Matarazzo"],[1569,150,"São Miguel"],[1946,147,"Pedreira"],[1466,169,"Jardim Pedro"],[1466,188,"José Nunes"],[1466,210,"Limoeiro"],[1627,183,"Vila Curuçá"],[1782,181,"Jardim Camargo"],[1782,200,"Novo"],[1929,179,"Jardim do Algarve"],[1950,203,"Vila Varela"],[1360,237,"Jardim Três"],[1360,256,"Marias"],[1555,232,"Vila Chavantes"],[1577,257,"Vila Progresso"],[1723,237,"Santa Margarida"],[1723,256,"Paulista"],[1850,247,"Jardim Ivonete"],[1402,276,"Burgo Paulista"],[1588,288,"Parada XV"],[1588,307,"de Novembro"],[1450,300,"Cidade Antônio"],[1450,319,"Estêvão de"],[1450,338,"Carvalho"],[1932,275,"Poá",1],[1686,318,"Lajeado"],[1916,316,"Vila Cristela"],[1830,343,"Ferraz de Vasconcelos",1],[1773,376,"Vila Santo Antônio"],[1966,377,"Parque"],[1975,396,"Rosa"],[1780,403,"Parque São"],[1780,422,"Francisco"],[1363,401,"Jardim Brasília"],[1375,426,"Parque Savoy"],[1882,415,"Jardim Santiago"],[1932,434,"-46.39917, -23.56002"]
];
for (const [x, y, name, city] of names)
  el("labels", "text", { x: Math.round(80 + x / 3), y: Math.round(242 + y / 3), class: city ? "city" : "place" }, name);

const track = [[503,400],[453,372],[415,245],[500,205],[572,206],[582,212],[835,148],[844,153],[978,117],[980,110],[943,90],[930,86],[922,85],[882,53],[867,90],[850,140],[856,118],[854,125],[880,113],[896,100],[908,84],[905,70],[928,95],[943,94],[985,93],[995,97],[1008,100],[1010,124],[1021,146],[989,165],[989,197],[676,428]];
for (const [cx, cy] of track) el("track", "circle", { cx, cy, r: 6 });
const stations = [[120,268],[200,277],[330,301],[403,328],[570,255],[612,262],[1334,107],[1403,107],[1551,130],[1640,138],[1711,145],[1775,106],[1600,333],[1533,345],[1660,346],[640,365],[720,405],[870,330],[840,410]];
for (const [cx, cy] of stations) el("stations", "circle", { cx, cy, r: 4 });
```
